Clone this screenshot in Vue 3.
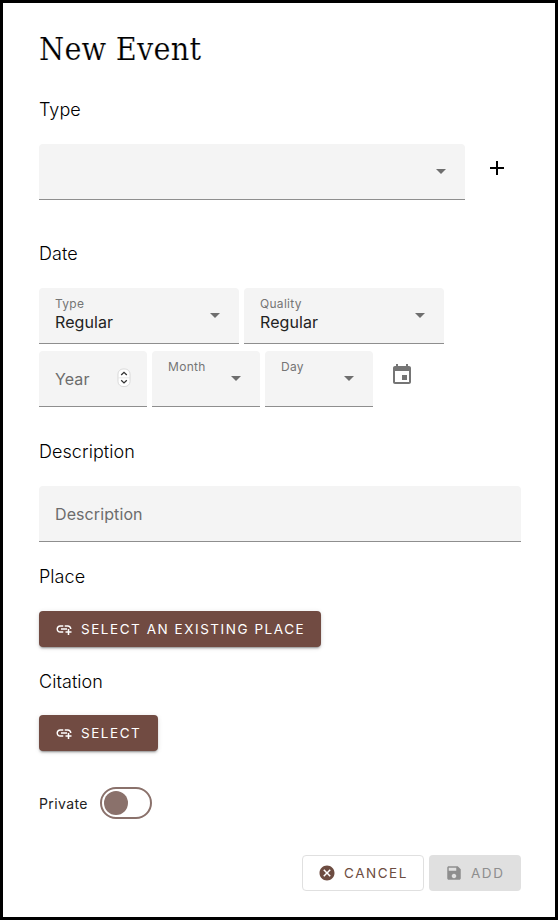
<script setup>
import { ref } from 'vue'

const title = ref('New Event')
const icons = {
  plus: 'M19 13h-6v6h-2v-6H5v-2h6V5h2v6h6z',
  event: 'M17 12h-5v5h5zM16 1v2H8V1H6v2H5c-1.11 0-1.99.9-1.99 2L3 19c0 1.1.89 2 2 2h14c1.1 0 2-.9 2-2V5c0-1.1-.9-2-2-2h-1V1zm3 18H5V8h14z',
  link: 'M8 11h8v2H8zm12.1 1H22c0-2.76-2.24-5-5-5h-4v1.9h4c1.71 0 3.1 1.39 3.1 3.1M3.9 12c0-1.71 1.39-3.1 3.1-3.1h4V7H7c-2.76 0-5 2.24-5 5s2.24 5 5 5h4v-1.9H7c-1.71 0-3.1-1.39-3.1-3.1M19 12h-2v3h-3v2h3v3h2v-3h3v-2h-3z',
  cancel: 'M12 2C6.47 2 2 6.47 2 12s4.47 10 10 10 10-4.47 10-10S17.53 2 12 2m5 13.59L15.59 17 12 13.41 8.41 17 7 15.59 10.59 12 7 8.41 8.41 7 12 10.59 15.59 7 17 8.41 13.41 12z',
  save: 'M17 3H5c-1.11 0-2 .9-2 2v14c0 1.1.89 2 2 2h14c1.1 0 2-.9 2-2V7zm-5 16c-1.66 0-3-1.34-3-3s1.34-3 3-3 3 1.34 3 3-1.34 3-3 3m3-10H5V5h10z',
}
const topSelects = [
  { label: 'Type', value: 'Regular' },
  { label: 'Quality', value: 'Regular' },
]
</script>

<template>
  <main class="dialog">
    <h1>{{ title }}</h1>

    <section class="type">
      <h2>Type</h2>
      <div class="row">
        <div class="field wide">
          <svg class="arrow" viewBox="0 0 10 5"><path d="M0 0h10L5 5z" /></svg>
        </div>
        <svg class="icon add-type" viewBox="0 0 24 24"><path :d="icons.plus" /></svg>
      </div>
    </section>

    <section class="date">
      <h2>Date</h2>
      <div class="row">
        <div v-for="s in topSelects" :key="s.label" class="field medium">
          <div class="content">
            <span class="label">{{ s.label }}</span>
            <span class="value">{{ s.value }}</span>
          </div>
          <svg class="arrow" viewBox="0 0 10 5"><path d="M0 0h10L5 5z" /></svg>
        </div>
      </div>
      <div class="row second">
        <div class="field small">
          <span class="placeholder">Year</span>
          <svg class="spinner" viewBox="0 0 14 20">
            <rect x="1" y="1" width="12" height="17.5" rx="5" fill="#fff" stroke="#d2d2d2" stroke-width="0.8" />
            <path d="M1 9.8h12" stroke="#e4e4e4" stroke-width="0.8" />
            <path d="M4.2 7 7 4.3 9.8 7M4.2 12.2 7 14.9l2.8-2.7" fill="none" stroke="#333" stroke-width="1.3" />
          </svg>
        </div>
        <div v-for="label in ['Month', 'Day']" :key="label" class="field small">
          <div class="content"><span class="label">{{ label }}</span></div>
          <svg class="arrow" viewBox="0 0 10 5"><path d="M0 0h10L5 5z" /></svg>
        </div>
        <svg class="icon calendar" viewBox="0 0 24 24"><path :d="icons.event" /></svg>
      </div>
    </section>

    <section class="description">
      <h2>Description</h2>
      <div class="field">
        <span class="placeholder">Description</span>
      </div>
    </section>

    <section class="place">
      <h2>Place</h2>
      <button class="btn filled">
        <svg viewBox="0 0 24 24"><path :d="icons.link" /></svg><span>SELECT AN EXISTING PLACE</span>
      </button>
    </section>

    <section class="citation">
      <h2>Citation</h2>
      <button class="btn filled">
        <svg viewBox="0 0 24 24"><path :d="icons.link" /></svg><span>SELECT</span>
      </button>
    </section>

    <div class="private">
      <span>Private</span>
      <div class="switch"><div class="thumb"></div></div>
    </div>

    <footer>
      <button class="btn outlined">
        <svg viewBox="0 0 24 24"><path :d="icons.cancel" /></svg><span>CANCEL</span>
      </button>
      <button class="btn disabled">
        <svg viewBox="0 0 24 24"><path :d="icons.save" /></svg><span>ADD</span>
      </button>
    </footer>
  </main>
</template>

<style>
body {
  margin: 0;
}
</style>

<style scoped>
.dialog {
  box-sizing: border-box;
  width: 558px;
  height: 920px;
  border: 3px solid #000;
  padding: 26px 34px 0 36px;
  background: #fff;
  color: #000;
  font-family: Inter, sans-serif;
  overflow: hidden;
}
h1 {
  margin: 0 0 29px;
  height: 40px;
  line-height: 40px;
  font-family: 'Roboto Slab', 'DejaVu Serif Condensed', 'DejaVu Serif', serif;
  font-size: 32px;
  font-weight: 300;
  letter-spacing: 0.2px;
  -webkit-text-stroke: 0.2px #fff;
  white-space: nowrap;
}
h2 {
  margin: 0 0 22px;
  height: 24px;
  line-height: 24px;
  font-size: 18px;
  font-weight: 340;
  letter-spacing: 0.05px;
}
.row {
  display: flex;
  gap: 5px;
}
.second {
  margin-top: 7px;
}
.field {
  box-sizing: border-box;
  display: flex;
  height: 56px;
  padding: 0 16px;
  justify-content: space-between;
  align-items: center;
  background: #f4f4f4;
  border-bottom: 1px solid #8e8e8e;
  border-radius: 4px 4px 0 0;
  letter-spacing: 0.1px;
}
.wide {
  width: 426px;
}
.medium {
  width: 200px;
}
.small {
  width: 108px;
}
.content {
  display: flex;
  flex-direction: column;
  align-self: flex-start;
  padding-top: 8px;
}
.label {
  height: 16px;
  line-height: 16px;
  font-size: 12px;
  font-weight: 400;
  letter-spacing: 0.3px;
  color: #757575;
}
.value {
  height: 20px;
  line-height: 20px;
  font-size: 16px;
  font-weight: 400;
  letter-spacing: 0.1px;
  color: #222;
}
.placeholder {
  font-size: 16px;
  font-weight: 400;
  color: #6c6c6c;
}
.arrow {
  width: 10px;
  height: 5px;
  margin-left: auto;
  margin-right: 3px;
  fill: #6e6e6e;
}
.spinner {
  width: 14px;
  height: 20px;
  margin: 0 0.5px 1px 0;
}
.icon {
  width: 24px;
  height: 24px;
}
.add-type {
  margin: 12px 0 0 15px;
}
.calendar {
  margin: 12px 0 0 12px;
  fill: #757575;
}
.date {
  margin-top: 42px;
}
.description {
  margin-top: 33px;
}
.place,
.citation {
  margin-top: 23px;
}
.citation h2 {
  margin-bottom: 21px;
}
.description .field {
  width: 482px;
}
.btn {
  box-sizing: border-box;
  display: flex;
  align-items: center;
  gap: 8px;
  height: 36px;
  padding: 0 16px;
  border: 0;
  border-radius: 4px;
  font-family: Inter, sans-serif;
  font-size: 13.5px;
  font-weight: 400;
  letter-spacing: 1.54px;
  white-space: nowrap;
}
.btn svg {
  width: 18px;
  height: 18px;
  flex: none;
  fill: currentColor;
}
.filled {
  background: #714b42;
  color: #fff;
  box-shadow: 0 3px 1px -2px rgba(0, 0, 0, 0.2), 0 2px 2px rgba(0, 0, 0, 0.14), 0 1px 5px rgba(0, 0, 0, 0.12);
}
.place .btn {
  width: 282px;
}
.citation .btn {
  width: 119px;
}
.private {
  display: flex;
  align-items: center;
  height: 32px;
  margin-top: 36px;
  font-size: 14px;
  letter-spacing: 0.4px;
  color: #222;
}
.private span {
  width: 61px;
}
.switch {
  box-sizing: border-box;
  width: 52px;
  height: 32px;
  padding: 2px;
  border: 2px solid #8a716b;
  border-radius: 16px;
}
.thumb {
  width: 24px;
  height: 24px;
  border-radius: 50%;
  background: #8a716b;
}
footer {
  display: flex;
  gap: 5px;
  margin-top: 36px;
  padding-left: 263px;
}
.outlined {
  width: 122px;
  padding: 0 15px;
  border: 1px solid #e0e0e0;
  background: #fff;
  color: #6d4c41;
}
.disabled {
  width: 92px;
  background: #e0e0e0;
  color: #8e8e8e;
}
</style>
